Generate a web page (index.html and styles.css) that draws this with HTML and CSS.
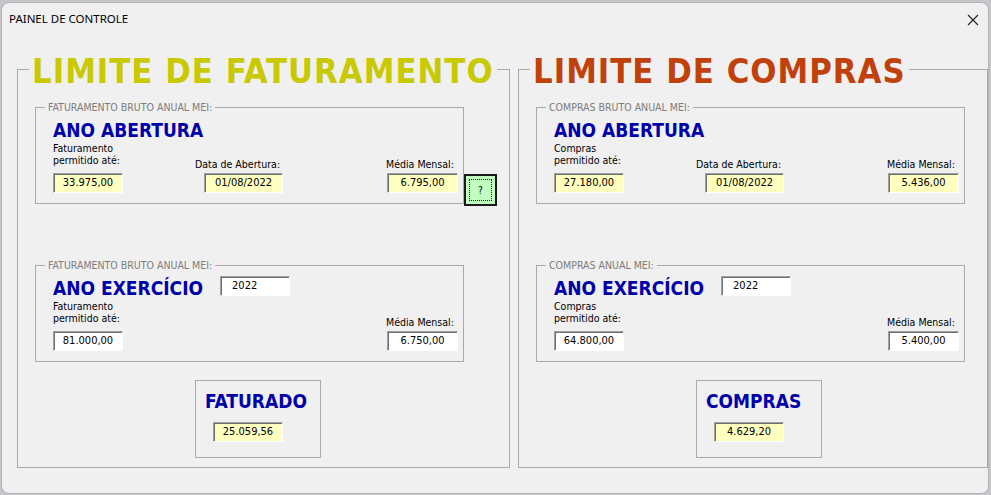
FILE: index.html
```html
<!DOCTYPE html>
<html lang="pt-BR">
<head>
    <meta charset="UTF-8">
    <title>Painel de Controle</title>
    <link rel="stylesheet" href="styles.css">
</head>
<body>
<div id="janela">
    <div class="titulo">
        <span>PAINEL DE CONTROLE</span>
        <svg class="fechar" width="12" height="12" viewBox="0 0 12 12"><path d="M1 1L11 11M11 1L1 11"/></svg>
    </div>
    <div class="paineis">
        <!-- lado esquerdo: faturamento -->
        <fieldset class="quadro">
            <legend class="amarelo">LIMITE DE FATURAMENTO</legend>
            <div class="linha">
                <fieldset class="grupo">
                    <legend>FATURAMENTO BRUTO ANUAL MEI:</legend>
                    <div class="corpo">
                        <div class="cabeca">ANO ABERTURA</div>
                        <div class="campos">
                            <div class="campo c1"><label>Faturamento<br>permitido até:</label><div class="caixa amarela">33.975,00</div></div>
                            <div class="campo c2"><label>Data de Abertura:</label><div class="caixa amarela">01/08/2022</div></div>
                            <div class="campo c3"><label>Média Mensal:</label><div class="caixa amarela">6.795,00</div></div>
                        </div>
                    </div>
                </fieldset>
                <button class="ajuda"><span>?</span></button>
            </div>
            <fieldset class="grupo segundo">
                <legend>FATURAMENTO BRUTO ANUAL MEI:</legend>
                <div class="corpo">
                    <div class="cabeca">ANO EXERCÍCIO <div class="caixa ano">2022</div></div>
                    <div class="campos">
                        <div class="campo c1"><label>Faturamento<br>permitido até:</label><div class="caixa">81.000,00</div></div>
                        <div class="campo c3"><label>Média Mensal:</label><div class="caixa">6.750,00</div></div>
                    </div>
                </div>
            </fieldset>
            <div class="total">
                <div class="cabeca">FATURADO</div>
                <div class="caixa amarela">25.059,56</div>
            </div>
        </fieldset>

        <!-- lado direito: compras -->
        <fieldset class="quadro">
            <legend class="laranja">LIMITE DE COMPRAS</legend>
            <div class="linha">
                <fieldset class="grupo">
                    <legend>COMPRAS BRUTO ANUAL MEI:</legend>
                    <div class="corpo">
                        <div class="cabeca">ANO ABERTURA</div>
                        <div class="campos">
                            <div class="campo c1"><label>Compras<br>permitido até:</label><div class="caixa amarela">27.180,00</div></div>
                            <div class="campo c2"><label>Data de Abertura:</label><div class="caixa amarela">01/08/2022</div></div>
                            <div class="campo c3"><label>Média Mensal:</label><div class="caixa amarela">5.436,00</div></div>
                        </div>
                    </div>
                </fieldset>
            </div>
            <fieldset class="grupo segundo">
                <legend>COMPRAS ANUAL MEI:</legend>
                <div class="corpo">
                    <div class="cabeca">ANO EXERCÍCIO <div class="caixa ano">2022</div></div>
                    <div class="campos">
                        <div class="campo c1"><label>Compras<br>permitido até:</label><div class="caixa">64.800,00</div></div>
                        <div class="campo c3"><label>Média Mensal:</label><div class="caixa">5.400,00</div></div>
                    </div>
                </div>
            </fieldset>
            <div class="total">
                <div class="cabeca">COMPRAS</div>
                <div class="caixa amarela">4.629,20</div>
            </div>
        </fieldset>
    </div>
</div>
</body>
</html>
```

FILE: styles.css
```css
*{
    margin: 0;
    padding: 0;
    box-sizing: border-box;
}
body{
    background: #c9c4cc;
    font-family: "DejaVu Sans Condensed", "DejaVu Sans", sans-serif;
    font-stretch: condensed;
}
#janela{
    width: 988px;
    height: 492px;
    margin: 2px 0 0 1px;
    background: #f0f0f0;
    border: 1px solid #b4b4b4;
    border-radius: 8px;
    overflow: hidden;
}
.titulo{
    height: 31px;
    padding: 0 9px 0 7px;
    display: flex;
    align-items: center;
    justify-content: space-between;
    font-family: "Noto Sans", sans-serif;
    font-stretch: normal;
    font-size: 11.5px;
    color: #000;
}
.fechar{
    margin-top: 2px;
    stroke: #222;
    stroke-width: 1.1;
    fill: none;
}
.paineis{
    display: flex;
    gap: 8px;
    padding: 14px 0 0 15px;
}

/* quadro grande de cada lado */
.quadro{
    border: 1px solid #a9a9a9;
    min-width: 0;
    padding: 0 0 9px 0;
}
.quadro:first-child{
    width: 493px;
}
.quadro:last-child{
    flex: 1;
}
.quadro > legend{
    margin-left: 11px;
    padding: 3px 3px 0;
    font-size: 34.3px;
    line-height: 40px;
    font-weight: bold;
    letter-spacing: 1px;
}
.amarelo{
    color: #c9c900;
}
.laranja{
    color: #c1410a;
}

.linha{
    display: flex;
    align-items: flex-end;
    margin-top: 10px;
}
.grupo{
    width: 429px;
    margin-left: 17px;
    border: 1px solid #a9a9a9;
    min-width: 0;
}
.grupo > legend{
    margin-left: 9px;
    padding: 0 3px;
    font-size: 10.5px;
    line-height: 13px;
    color: #7c7c7c;
}
.grupo.segundo{
    margin-top: 55px;
}
.corpo{
    padding: 6px 5px 10px 17px;
}
.cabeca{
    font-size: 19px;
    line-height: 20px;
    font-weight: bold;
    color: #0000aa;
    display: flex;
    align-items: flex-start;
}
.campos{
    display: grid;
    grid-template-columns: 142px 191px 71px;
    align-items: end;
    margin-top: 2px;
}
.campo label{
    display: block;
    font-size: 10.5px;
    line-height: 12px;
    color: #000;
    margin-bottom: 3px;
}
.campo.c1 label{
    margin-bottom: 7px;
}
.campo.c2 .caixa{
    margin-left: 9px;
    width: 79px;
}
.campo.c3{
    grid-column: 3;
}
.campo.c3 .caixa{
    margin-left: 1px;
    width: 71px;
}

/* caixas de texto afundadas */
.caixa{
    width: 70px;
    height: 20px;
    background: #fff;
    border: 1px solid;
    border-color: #a0a0a0 #fff #fff #a0a0a0;
    box-shadow: inset 1px 1px 0 #6e6e6e;
    font-size: 11px;
    font-weight: normal;
    letter-spacing: 0;
    line-height: 18px;
    text-align: center;
    color: #000;
}
.caixa.amarela{
    background: #ffffc0;
}
.caixa.ano{
    margin: -2px 0 0 17px;
    text-align: left;
    padding-left: 11px;
}

.ajuda{
    width: 33px;
    height: 32px;
    margin-bottom: -2px;
    background: #c0ffc0;
    border: 2px solid #1a1a1a;
    padding: 3px;
    font-family: inherit;
    font-size: 10px;
}
.ajuda span{
    display: flex;
    align-items: center;
    justify-content: center;
    height: 100%;
    border: 1px dotted #222;
}

.total{
    width: 126px;
    height: 78px;
    margin: 18px 0 0 177px;
    border: 1px solid #a9a9a9;
    padding: 10px 0 0 9px;
}
.total .caixa{
    margin: 11px 0 0 8px;
}
```
